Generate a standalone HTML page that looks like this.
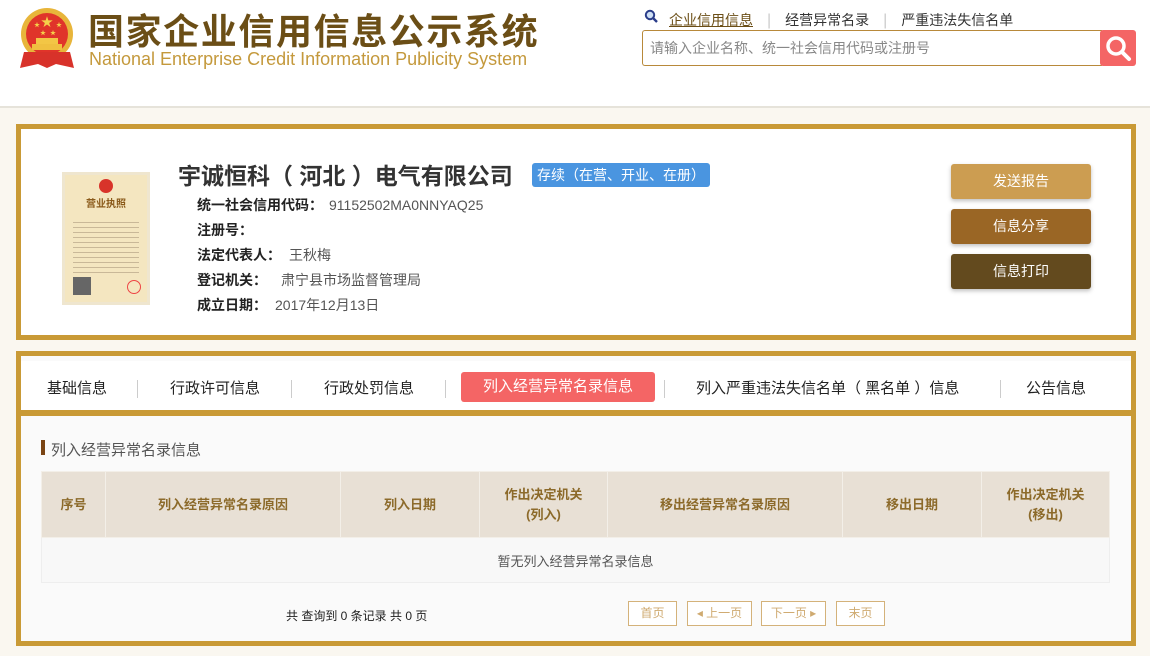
<!DOCTYPE html>
<html><head><meta charset="utf-8"><style>
*{margin:0;padding:0;box-sizing:border-box}
body{width:1150px;height:656px;overflow:hidden;background:#faf7f0;font-family:"Liberation Sans","Noto Sans CJK SC",sans-serif;position:relative}
.abs{position:absolute}
#hdr{left:0;top:0;width:1150px;height:108px;background:#fff;border-bottom:2px solid #e6e3da}
.t1{left:88px;top:3px;font-size:36px;font-weight:bold;color:#6b4e16;letter-spacing:1.6px;white-space:nowrap}
.t2{left:89px;top:49px;font-size:18px;color:#c4993c;white-space:nowrap}
.nav a{color:#333;font-size:14px;text-decoration:none}
.card{border:5px solid #c99a36;background:#fff}
.lbl{font-size:14px;font-weight:bold;color:#222;white-space:nowrap}
.val{font-size:14px;color:#555;font-weight:normal;margin-left:8px}
.btn{position:absolute;left:951px;width:140px;height:35px;border-radius:3px;color:#fff;font-size:14px;text-align:center;line-height:35px;box-shadow:0 2px 4px rgba(0,0,0,.25)}
.tab{position:absolute;top:377px;font-size:15px;color:#222;white-space:nowrap}
.sep{position:absolute;top:380px;width:1px;height:18px;background:#ccc}
table{border-collapse:collapse;position:absolute;left:41px;top:471px;width:1069px}
th{background:#e8e0d5;color:#8c6a2a;font-size:13px;font-weight:bold;height:66px;border:1px solid #f3efe8;line-height:20px}
td{height:45px;text-align:center;font-size:13px;color:#555;background:#f8f8f8;border:1px solid #eee}
.pg{position:absolute;top:601px;height:25px;border:1px solid #d4b27a;color:#cfaa70;font-size:12px;text-align:center;line-height:23px;background:#fff}
</style></head><body>
<div id="hdr" class="abs"></div>
<svg class="abs" style="left:18px;top:6px" width="58" height="64" viewBox="0 0 58 64">
<circle cx="29" cy="28" r="26" fill="#e8b53a"/><circle cx="29" cy="28" r="21" fill="#e0342a"/>
<path d="M6 46 L2 62 L20 58 L29 62 L38 58 L56 62 L52 46 Z" fill="#d8322a"/>
<rect x="14" y="38" width="30" height="6" fill="#f0c040"/><rect x="18" y="32" width="22" height="6" fill="#f3c645"/>
<text x="29" y="20" font-size="12" text-anchor="middle" fill="#f5d04a">★</text>
<text x="16" y="21" font-size="6" fill="#f5d04a">★</text><text x="38" y="21" font-size="6" fill="#f5d04a">★</text>
<text x="22" y="29" font-size="6" fill="#f5d04a">★</text><text x="32" y="29" font-size="6" fill="#f5d04a">★</text>
</svg>
<div class="abs t1">国家企业信用信息公示系统</div>
<div class="abs t2">National Enterprise Credit Information Publicity System</div>
<svg class="abs" style="left:644px;top:9px" width="14" height="14" viewBox="0 0 14 14"><circle cx="6" cy="6" r="4.2" fill="#cfe0f5" stroke="#2a3d8a" stroke-width="2"/><path d="M9 9 L13 13" stroke="#2a3d8a" stroke-width="2.4"/></svg>
<div class="abs nav" style="left:669px;top:10px;white-space:nowrap"><a style="text-decoration:underline;color:#6b4e16">企业信用信息</a><span style="color:#ccc;margin:0 14px">|</span><a>经营异常名录</a><span style="color:#ccc;margin:0 14px">|</span><a>严重违法失信名单</a></div>
<div class="abs" style="left:642px;top:30px;width:460px;height:36px;border:1px solid #b8893a;border-right:none;border-radius:3px 0 0 3px;background:#fff;font-size:14px;color:#888;line-height:34px;padding-left:7px">请输入企业名称、统一社会信用代码或注册号</div>
<div class="abs" style="left:1100px;top:30px;width:36px;height:36px;background:#f46565;border-radius:3px"><svg width="36" height="36" viewBox="0 0 36 36"><circle cx="16" cy="16" r="8" fill="none" stroke="#fff" stroke-width="3.5"/><path d="M22 22 L29 29" stroke="#fff" stroke-width="4" stroke-linecap="round"/></svg></div>

<div class="abs card" style="left:16px;top:124px;width:1120px;height:216px"></div>
<div class="abs" style="left:62px;top:172px;width:88px;height:133px;background:#f4e6c0;border:3px solid #efe6cf">
<div style="margin:4px auto 0;width:14px;height:14px;border-radius:50%;background:#d8342a"></div>
<div style="text-align:center;font-size:10px;color:#8a5a1a;font-weight:bold;margin-top:2px">营业执照</div>
<div style="margin:8px 8px 0;height:55px;background:repeating-linear-gradient(#f4e6c0 0 4px,#c9b898 4px 5px)"></div>
<div style="margin:4px 0 0 8px;width:18px;height:18px;background:#666"></div>
<div style="position:absolute;right:6px;bottom:8px;width:14px;height:14px;border-radius:50%;border:1px solid #e44"></div></div>
<div class="abs" style="left:178px;top:157px;font-size:23px;font-weight:bold;color:#333;white-space:nowrap">宇诚恒科（ 河北 ）电气有限公司</div>
<div class="abs" style="left:532px;top:163px;width:178px;height:24px;background:#4a95e0;border-radius:3px;color:#fff;font-size:14px;line-height:24px;text-align:center">存续（在营、开业、在册）</div>
<div class="abs lbl" style="left:197px;top:195px">统一社会信用代码：<span class="val" style="margin-left:6px">91152502MA0NNYAQ25</span></div>
<div class="abs lbl" style="left:197px;top:220px">注册号：</div>
<div class="abs lbl" style="left:197px;top:245px">法定代表人：<span class="val">王秋梅</span></div>
<div class="abs lbl" style="left:197px;top:270px">登记机关：<span class="val" style="margin-left:14px">肃宁县市场监督管理局</span></div>
<div class="abs lbl" style="left:197px;top:295px">成立日期：<span class="val">2017年12月13日</span></div>
<div class="btn" style="top:164px;background:#cc9d51">发送报告</div>
<div class="btn" style="top:209px;background:#9a6625">信息分享</div>
<div class="btn" style="top:254px;background:#634a1e">信息打印</div>

<div class="abs card" style="left:16px;top:351px;width:1120px;height:295px;background:#fafafa"></div>
<div class="abs" style="left:21px;top:361px;width:1110px;height:49px;background:#fff"></div>
<div class="abs" style="left:21px;top:410px;width:1110px;height:6px;background:#c99a36"></div>
<div class="tab" style="left:47px">基础信息</div><div class="sep" style="left:137px"></div>
<div class="tab" style="left:170px">行政许可信息</div><div class="sep" style="left:291px"></div>
<div class="tab" style="left:324px">行政处罚信息</div><div class="sep" style="left:445px"></div>
<div class="abs" style="left:461px;top:372px;width:194px;height:30px;background:#f46565;border-radius:3px;color:#fff;font-size:15px;line-height:30px;text-align:center">列入经营异常名录信息</div>
<div class="sep" style="left:664px"></div>
<div class="tab" style="left:696px">列入严重违法失信名单（ 黑名单 ）信息</div><div class="sep" style="left:1000px"></div>
<div class="tab" style="left:1026px">公告信息</div>
<div class="abs" style="left:41px;top:440px;width:4px;height:15px;background:#7a4413"></div>
<div class="abs" style="left:51px;top:439px;font-size:15px;color:#555">列入经营异常名录信息</div>
<table><tr><th style="width:64px">序号</th><th style="width:235px">列入经营异常名录原因</th><th style="width:139px">列入日期</th><th style="width:128px">作出决定机关<br>(列入)</th><th style="width:235px">移出经营异常名录原因</th><th style="width:139px">移出日期</th><th>作出决定机关<br>(移出)</th></tr>
<tr><td colspan="7">暂无列入经营异常名录信息</td></tr></table>
<div class="abs" style="left:286px;top:607px;font-size:12px;color:#222">共 查询到 0 条记录 共 0 页</div>
<div class="pg" style="left:628px;width:49px">首页</div>
<div class="pg" style="left:687px;width:65px">◂ 上一页</div>
<div class="pg" style="left:761px;width:65px">下一页 ▸</div>
<div class="pg" style="left:836px;width:49px">末页</div>
</body></html>
